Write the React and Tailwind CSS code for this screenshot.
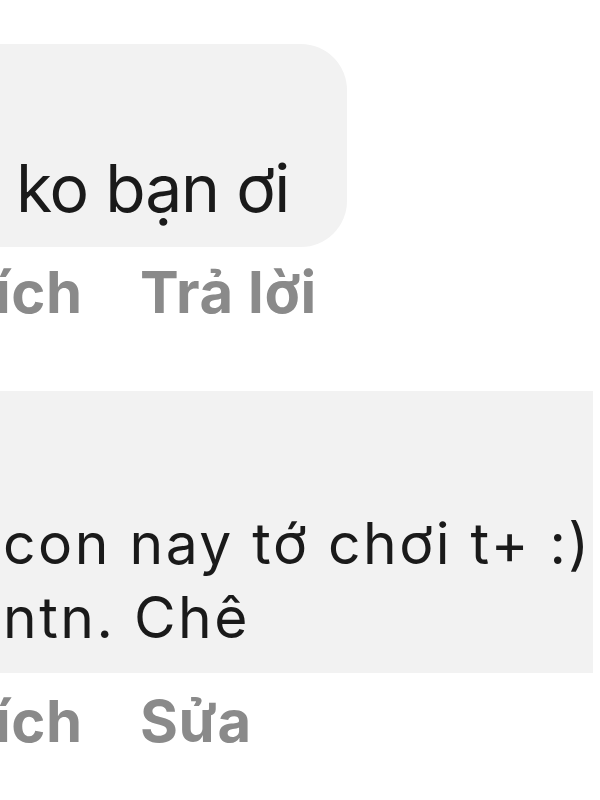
export default function App() {
  return (
    <div className="w-[600px] h-[800px] overflow-hidden bg-white font-['Inter','Roboto',sans-serif]">
      <div className="pt-[44px]">
        {/* first comment */}
        <div className="-ml-[60px] w-[407px] h-[203px] rounded-[46px] bg-[#f2f2f2] pl-[76px] pt-[104px]">
          <p className="text-[66px] leading-[80px] tracking-[-1.2px] text-[#1a1a1a] whitespace-nowrap">ko bạn ơi</p>
        </div>
        <div className="mt-[10px] flex text-[58px] leading-[70px] font-bold tracking-[0.6px] text-[#8a8a8a] whitespace-nowrap">
          <span className="-ml-[5px] w-[145px]">ích</span>
          <span>Trả lời</span>
        </div>

        {/* second comment */}
        <div className="mt-[64px] -ml-[40px] w-[633px] h-[282px] bg-[#f2f2f2] pl-[43px] pt-[116px]">
          <p className="text-[57px] leading-[74px] tracking-[2.5px] text-[#1a1a1a] whitespace-nowrap">con nay tớ chơi t+ :)</p>
          <p className="text-[57px] leading-[74px] tracking-[2.5px] text-[#1a1a1a] whitespace-nowrap">ntn. Chê</p>
        </div>
        <div className="mt-[13px] flex text-[58px] leading-[70px] font-bold tracking-[0.6px] text-[#8a8a8a] whitespace-nowrap">
          <span className="-ml-[5px] w-[145px]">ích</span>
          <span>Sửa</span>
        </div>
      </div>
    </div>
  );
}
